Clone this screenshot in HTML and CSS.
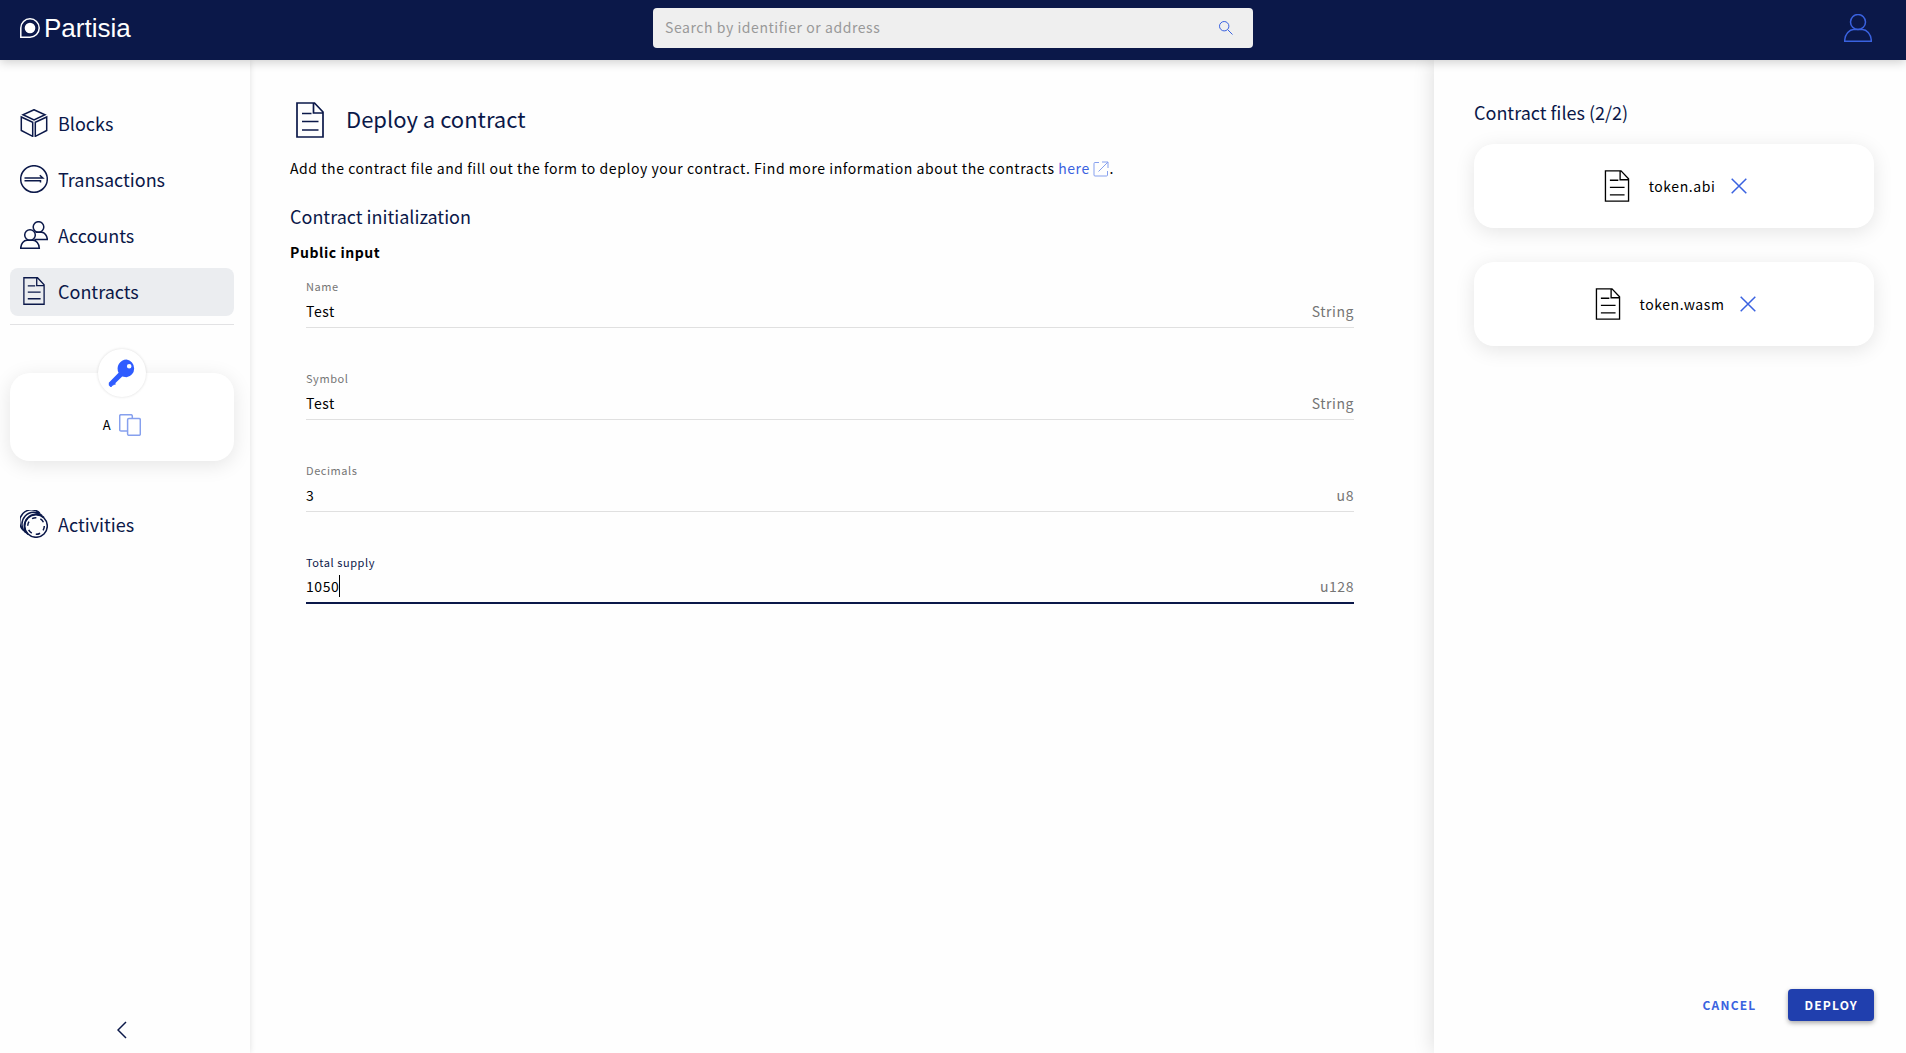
FILE: index.html
```html
<!DOCTYPE html>
<html lang="en">
<head>
<meta charset="utf-8">
<meta name="viewport" content="width=device-width, initial-scale=1">
<title>Deploy a contract – Partisia</title>
<link rel="stylesheet" href="styles.css">
</head>
<body>
<svg class="sprite" aria-hidden="true">
  <symbol id="doc" viewBox="0 0 28 36"><path d="M1 1H18.500L27 10V35H1ZM17.500 1V11H27M6 11.500H15.500M6 19.500H22.500M6 28H22.500"/></symbol>
  <symbol id="user" viewBox="0 0 28 28"><circle cx="14" cy="8" r="7.500"/><path d="M.7 27.300C.7 19.500 6 15.500 9.500 15.500H18.500C22 15.500 27.300 19.500 27.300 27.300Z"/></symbol>
  <symbol id="cross" viewBox="0 0 16 16"><path d="M.7.7 15.300 15.300M15.300.7.7 15.300"/></symbol>
</svg>

<header class="topbar">
  <a class="logo" href="#">
    <svg class="logo-mark" width="20" height="20" viewBox="0 0 20 20"><path d="M.8 19.200V10A9.200 9.200 0 1 1 10 19.200Z" fill="none" stroke="#fff" stroke-width="1.500"/><circle cx="10" cy="10" r="5.300" fill="#fff"/></svg>
    <span>Partisia</span>
  </a>
  <form class="search">
    <input class="search-input" type="search" placeholder="Search by identifier or address" aria-label="Search by identifier or address">
    <button class="icon-button" type="button" aria-label="Search">
      <svg class="icon thin" width="14" height="14" viewBox="0 0 14 14"><circle cx="5.200" cy="5.200" r="4.700"/><path d="M8.500 8.500 13.500 13.500"/></svg>
    </button>
  </form>
  <button class="icon-button account" type="button" aria-label="Account"><svg class="icon" width="28" height="28"><use href="#user"/></svg></button>
</header>

<div class="layout">
  <nav class="sidebar">
    <a class="nav-item" href="#">
      <svg class="icon" width="28" height="28" viewBox="0 0 28 28"><path d="M14 .7 25 5.800 14 11 3 5.800ZM1.300 8 12.700 13.300V27.300L1.300 21.500ZM26.700 8 15.300 13.300V27.300L26.700 21.500Z"/></svg>
      Blocks
    </a>
    <a class="nav-item" href="#">
      <svg class="icon" width="28" height="28" viewBox="0 0 28 28"><circle cx="14" cy="14" r="13.300"/><path d="M4.500 13H22.800L19.800 10.300M4.500 15.800H20.500V17.500M22.800 13 19.800 13"/></svg>
      Transactions
    </a>
    <a class="nav-item" href="#">
      <svg class="icon" width="28" height="28" viewBox="0 0 28 28"><circle cx="18.500" cy="6" r="5.300"/><circle cx="10" cy="14" r="5.300"/><path d="M.7 27.300C.7 22.500 4 19.300 7 19.300H13C16 19.300 19.300 22.500 19.300 27.300ZM15.500 11.300H21.500C24.500 11.300 27.300 14.500 27.300 18.600H14.500"/></svg>
      Accounts
    </a>
    <a class="nav-item is-active" href="#" aria-current="page">
      <svg class="icon doc" width="28" height="28"><use href="#doc"/></svg>
      Contracts
    </a>
    <hr class="divider">
    <section class="card wallet">
      <div class="wallet-badge">
        <svg width="28" height="28" viewBox="0 0 28 28"><path fill="#2f5cff" fill-rule="evenodd" d="M18.500.5A9 9 0 0 1 18.500 18.300L14.200 17.500 7.500 24.100V25.700H5.800L5 26.800H3.800V28H2.500L.8 26.200V23.800L10.600 13.700A9 9 0 0 1 18.500.5ZM21.200 5A2.300 2.300 0 1 0 21.200 9.600A2.300 2.300 0 0 0 21.200 5Z"/></svg>
      </div>
      <span class="wallet-name">A</span>
      <button class="icon-button copy" type="button" aria-label="Copy address"><svg class="icon" width="22" height="22" viewBox="0 0 22 22"><path d="M8.600 17H2A1.300 1.300 0 0 1 .7 15.700V2A1.300 1.300 0 0 1 2 .7H12A1.300 1.300 0 0 1 13.300 2V4.500"/><rect x="8.600" y="4.500" width="12.700" height="16.800" rx="1.300"/></svg></button>
    </section>
    <a class="nav-item" href="#">
      <svg class="icon" width="28" height="28" viewBox="0 0 28 28"><circle cx="16" cy="16" r="11.300"/><circle cx="16" cy="16" r="8.300" stroke-dasharray="4.500 4.190"/><path d="M8 24.500A11.300 11.300 0 0 1 24 7.500M5.700 22.800A11.300 11.300 0 0 1 22 5.500M3.500 20.500A11.300 11.300 0 0 1 19.800 3"/></svg>
      Activities
    </a>
    <button class="icon-button collapse" type="button" aria-label="Collapse menu"><svg class="icon" width="10" height="18" viewBox="0 0 10 18"><path d="M9 1 1 9 9 17"/></svg></button>
  </nav>

  <main class="content">
    <div class="page-title">
      <svg class="icon doc" width="40" height="36"><use href="#doc"/></svg>
      <h1>Deploy a contract</h1>
    </div>
    <p class="intro">Add the contract file and fill out the form to deploy your contract. Find more information about the contracts <a href="#">here <svg class="icon thin external" width="16" height="16" viewBox="0 0 16 16"><path d="M6 1.500H2A1 1 0 0 0 1 2.500V14A1 1 0 0 0 2 15H13.500A1 1 0 0 0 14.500 14V10M9 1H15V7M15 1 5.500 10.500"/></svg></a>.</p>
    <h2>Contract initialization</h2>
    <form class="inputs" id="deploy-form">
      <h3>Public input</h3>
      <div class="field">
        <label for="name">Name</label>
        <div class="field-row"><input id="name" type="text" value="Test"><span>String</span></div>
      </div>
      <div class="field">
        <label for="symbol">Symbol</label>
        <div class="field-row"><input id="symbol" type="text" value="Test"><span>String</span></div>
      </div>
      <div class="field">
        <label for="decimals">Decimals</label>
        <div class="field-row"><input id="decimals" type="text" value="3"><span>u8</span></div>
      </div>
      <div class="field is-focused">
        <label for="supply">Total supply</label>
        <div class="field-row"><input id="supply" type="text" value="1050" autofocus><span>u128</span></div>
      </div>
    </form>
  </main>

  <aside class="files">
    <h2>Contract files (2/2)</h2>
    <div class="card file">
      <svg class="icon" width="32" height="32"><use href="#doc"/></svg>
      <span>token.abi</span>
      <button class="icon-button" type="button" aria-label="Remove token.abi"><svg class="icon" width="16" height="16"><use href="#cross"/></svg></button>
    </div>
    <div class="card file">
      <svg class="icon" width="32" height="32"><use href="#doc"/></svg>
      <span>token.wasm</span>
      <button class="icon-button" type="button" aria-label="Remove token.wasm"><svg class="icon" width="16" height="16"><use href="#cross"/></svg></button>
    </div>
    <div class="actions">
      <button class="button" type="button">CANCEL</button>
      <button class="button primary" type="submit" form="deploy-form">DEPLOY</button>
    </div>
  </aside>
</div>
</body>
</html>
```
FILE: styles.css
```css
:root {
  --navy: #0b1849;
  --blue: #3a62e0;
  --muted: #757575;
}

* { box-sizing: border-box; }

body {
  margin: 0;
  min-height: 100vh;
  display: flex;
  flex-direction: column;
  background: #fefefe;
  color: #000;
  font: 14px/24px "Noto Sans CJK SC", "Open Sans", sans-serif;
  letter-spacing: 0.04em;
}

h1, h2, h3, p { margin: 0; font-weight: 400; }
a { color: inherit; text-decoration: none; }
button, input { font: inherit; letter-spacing: inherit; }

.sprite { position: absolute; width: 0; height: 0; }
.icon {
  flex: none;
  fill: none;
  stroke: currentColor;
  stroke-width: 1.5;
}
.thin { stroke-width: 1; }
.doc { stroke-width: 1.7; }

.icon-button {
  display: flex;
  padding: 0;
  border: 0;
  background: none;
  color: var(--blue);
  cursor: pointer;
}

/* Top bar */
.topbar {
  position: relative;
  z-index: 1;
  display: grid;
  grid-template-columns: 1fr minmax(0, 600px) 1fr;
  align-items: center;
  height: 60px;
  padding: 0 34px 4px;
  background: var(--navy);
  box-shadow: 0 2px 10px rgba(0, 0, 0, 0.2);
}
.logo {
  display: flex;
  align-items: center;
  gap: 4px;
  margin-left: -14px;
  color: #fff;
  font: 26px/28px "Liberation Sans", sans-serif;
  letter-spacing: normal;
}
.search {
  display: flex;
  align-items: center;
  height: 40px;
  padding: 0 20px 0 12px;
  border-radius: 4px;
  background: #efefef;
}
.search-input {
  flex: 1;
  min-width: 0;
  padding: 0 0 2px;
  border: 0;
  outline: 0;
  background: none;
}
.search-input::placeholder { color: #999; opacity: 1; }
.account { justify-self: end; }

/* Page columns */
.layout { flex: 1; display: flex; }

.sidebar {
  display: flex;
  flex-direction: column;
  gap: 8px;
  width: 250px;
  padding: 40px 16px 14px 10px;
  color: var(--navy);
  box-shadow: 0 0 6px rgba(0, 0, 0, 0.12);
}
.nav-item {
  display: flex;
  align-items: center;
  gap: 10px;
  height: 48px;
  padding: 0 10px 2px;
  border-radius: 8px;
  font-size: 18px;
  letter-spacing: normal;
}
.is-active { background: #ebedf0; }
.divider {
  width: 100%;
  margin: 0;
  border: 0;
  border-top: 1px solid #e2e2e4;
}

.card {
  border-radius: 20px;
  background: #fff;
  box-shadow: 0 4px 20px rgba(0, 0, 0, 0.1);
}
.wallet {
  position: relative;
  display: flex;
  align-items: center;
  justify-content: center;
  gap: 8px;
  height: 88px;
  margin: 40px 0 32px;
  padding-top: 16px;
}
.wallet-badge {
  position: absolute;
  top: -24px;
  left: calc(50% - 24px);
  display: grid;
  place-items: center;
  width: 48px;
  height: 48px;
  border-radius: 50%;
  background: #fff;
  box-shadow: 0 0 3px rgba(0, 0, 0, 0.14);
}
.wallet-name { color: #000; font-size: 13px; }
.copy { color: #86a0ee; }
.collapse {
  align-self: center;
  margin-top: auto;
  color: var(--navy);
}

.content { flex: 1; min-width: 0; padding: 40px; }
.page-title {
  display: flex;
  align-items: center;
  gap: 16px;
  height: 40px;
  color: var(--navy);
}
h1 { padding-bottom: 4px; font-size: 22px; letter-spacing: normal; }
h2 { color: var(--navy); font-size: 18px; letter-spacing: normal; }
h3 { font-size: 14px; font-weight: 700; }
.intro { margin: 16px 0 24px; }
.intro a { color: var(--blue); }
.external { vertical-align: -3px; color: #86a0ee; }

.inputs { margin-top: 12px; padding-right: 40px; }
.field { margin: 0 0 28px 16px; }
.field label {
  display: block;
  padding-top: 14px;
  color: var(--muted);
  font-size: 11px;
  line-height: 16px;
}
.field-row {
  position: relative;
  display: flex;
  height: 34px;
  align-items: center;
  border-bottom: 1px solid #e0e0e0;
}
.field-row input {
  flex: 1;
  min-width: 0;
  height: 24px;
  padding: 0;
  border: 0;
  outline: 0;
  background: none;
}
.field-row span { color: var(--muted); }
.is-focused label { color: var(--navy); }
.is-focused .field-row { border-bottom: 2px solid var(--navy); }

/* Steady caret after the four digits of the focused value */
.is-focused input { caret-color: transparent; }
.is-focused .field-row::after {
  content: "";
  position: absolute;
  top: 5px;
  left: calc(4ch + 2px);
  width: 1px;
  height: 22px;
  background: #000;
}

/* Uploaded files */
.files {
  display: flex;
  flex-direction: column;
  width: 472px;
  padding: 40px 32px 32px 40px;
  box-shadow: 0 0 20px rgba(0, 0, 0, 0.14);
}
.files h2 { margin-bottom: 20px; }
.file {
  display: flex;
  align-items: center;
  justify-content: center;
  gap: 16px;
  height: 84px;
  margin-bottom: 34px;
}
.actions {
  display: flex;
  justify-content: flex-end;
  gap: 16px;
  margin-top: auto;
}
.button {
  height: 32px;
  padding: 0 16px;
  border: 0;
  border-radius: 4px;
  background: none;
  color: var(--blue);
  font-size: 12px;
  font-weight: 700;
  letter-spacing: 0.1em;
  line-height: 30px;
  cursor: pointer;
}
.primary {
  background: #203fae;
  color: #fff;
  box-shadow: 0 2px 5px rgba(0, 0, 0, 0.35);
}
```
